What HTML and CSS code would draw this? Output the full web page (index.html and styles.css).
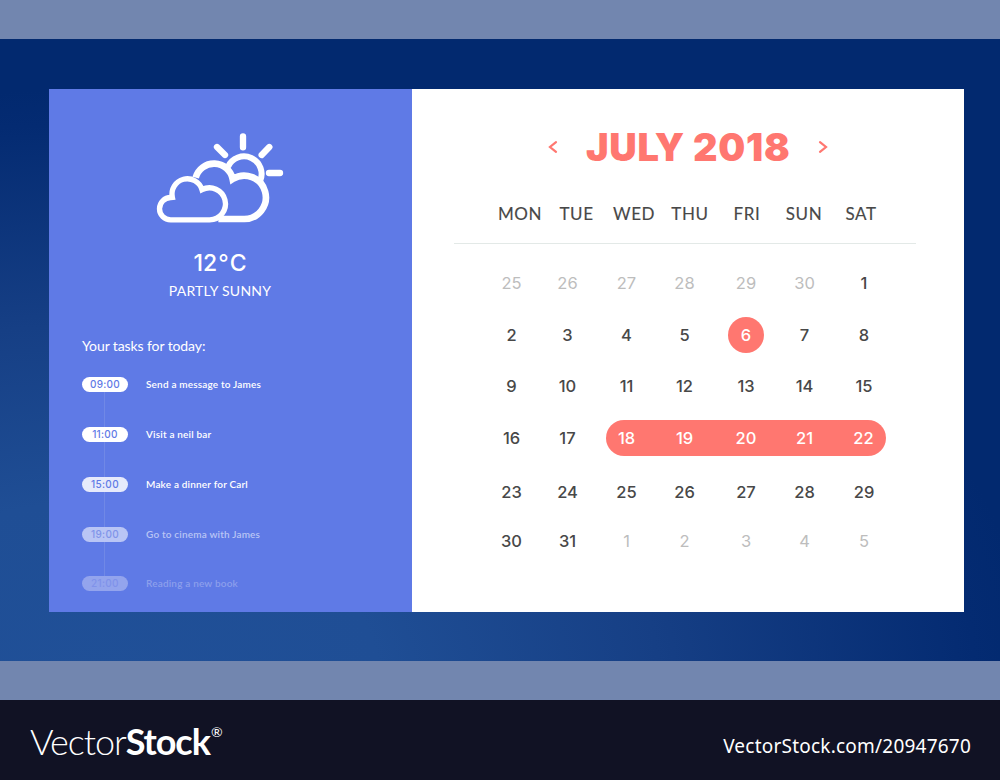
FILE: index.html
```
<!DOCTYPE html>
<html lang="en">
<head>
<meta charset="utf-8">
<title>Calendar</title>
<link rel="stylesheet" href="styles.css">
</head>
<body>
<main class="stage">
  <div class="backdrop">
    <div class="card">
      <aside class="side">
        <svg class="weather-icon" viewBox="0 0 480 360" fill="none" stroke="#fff">
          <g stroke-width="19" stroke-linecap="round">
            <path d="M309 49V82M231 81L255 105M388 81L365 105M387 159H420"/>
          </g>
          <path stroke-width="18" d="M264 140A51 51 0 0 1 360 184"/>
          <path stroke-width="20" d="M167 173A57 57 0 0 1 278 177A65 65 0 1 1 311 297H235"/>
          <path stroke-width="16" d="M97 232A46 46 0 0 1 186 209A48 48 0 1 1 209 299.500H92A33.500 33.500 0 0 1 92 232.500Z"/>
        </svg>
        <p class="temp">12<span class="deg">°</span>C</p>
        <p class="condition">PARTLY SUNNY</p>
        <h2 class="tasks-title">Your tasks for today:</h2>
        <ul class="tasks">
          <li class="task"><span class="time">09:00</span><span class="label">Send a message to James</span></li>
          <li class="task"><span class="time">11:00</span><span class="label">Visit a neil bar</span></li>
          <li class="task soft"><span class="time">15:00</span><span class="label">Make a dinner for Carl</span></li>
          <li class="task faded"><span class="time">19:00</span><span class="label">Go to cinema with James</span></li>
          <li class="task ghost"><span class="time">21:00</span><span class="label">Reading a new book</span></li>
        </ul>
      </aside>
      <section class="calendar">
        <header class="month">
          <svg class="arrow" viewBox="0 0 10 14"><path d="M8 2.200L2 7L8 11.800"/></svg>
          <h1 class="month-name">JULY 2018</h1>
          <svg class="arrow" viewBox="0 0 10 14"><path d="M2 2.200L8 7L2 11.800"/></svg>
        </header>
        <div class="weekdays"><span>MON</span><span>TUE</span><span>WED</span><span>THU</span><span>FRI</span><span>SUN</span><span>SAT</span></div>
        <div class="days">
          <span class="out">25</span><span class="out">26</span><span class="out">27</span><span class="out">28</span><span class="out">29</span><span class="out">30</span><span>1</span>
          <span>2</span><span>3</span><span>4</span><span>5</span><span class="today">6</span><span>7</span><span>8</span>
          <span>9</span><span>10</span><span>11</span><span>12</span><span>13</span><span>14</span><span>15</span>
          <span>16</span><span>17</span><div class="range"><span>18</span><span>19</span><span>20</span><span>21</span><span>22</span></div>
          <span>23</span><span>24</span><span>25</span><span>26</span><span>27</span><span>28</span><span>29</span>
          <span>30</span><span>31</span><span class="out">1</span><span class="out">2</span><span class="out">3</span><span class="out">4</span><span class="out">5</span>
        </div>
      </section>
    </div>
  </div>
</main>
<footer class="footer">
  <div class="brand"><span class="thin">Vector</span><b>Stock</b><span class="reg">®</span></div>
  <div class="link">VectorStock.com/20947670</div>
</footer>
</body>
</html>
```
FILE: styles.css
```
* { box-sizing: border-box; margin: 0; padding: 0; }
body { width: 1000px; height: 780px; overflow: hidden; font-family: Lato, "Liberation Sans", sans-serif; }
.stage { height: 700px; padding: 39px 0; background: #7286af; }
.backdrop {
  height: 622px; padding: 50px 36px 49px 49px;
  background: radial-gradient(ellipse 930px 590px at 100px 640px, #205098 0%, #1f4e95 30%, #163f85 60%, #042b72 94%, #02296f 100%);
}
.card { display: flex; height: 523px; }
.side { width: 363px; padding: 31px 33px 0; background: #5f7ae6; color: #fff; display: flex; flex-direction: column; }
.side > * { flex: none; }
.weather-icon { width: 160px; height: 120px; margin-left: 58px; }
.temp { margin: 6px 21px 0 0; height: 34px; line-height: 35px; font-family: Inter, sans-serif; font-size: 23px; font-weight: 500; text-align: center; }
.deg { margin: 0 1px; font-weight: 400; }
.condition { height: 22px; line-height: 22px; margin-right: 21px; font-size: 14px; letter-spacing: .25px; text-align: center; white-space: nowrap; }
.tasks-title { margin-top: 32px; height: 24px; line-height: 24px; font-size: 14px; font-weight: 400; letter-spacing: -.1px; white-space: nowrap; }
.tasks {
  margin-top: 18px; list-style: none;
  background: linear-gradient(#7088e6, #7088e6) 22px 8px / 1px 196px no-repeat;
}
.task { display: flex; align-items: center; height: 16px; margin-bottom: 34px; }
.time { width: 46px; height: 15px; line-height: 15px; border-radius: 8px; background: #fff; color: #5f7ae6; text-align: center; font-family: Inter, sans-serif; font-size: 10px; font-weight: 500; letter-spacing: .3px; }
.label { margin-left: 18px; font-size: 10px; font-weight: 600; letter-spacing: .18px; white-space: nowrap; }
.soft .time { background: #e6eafb; }
.faded { color: #b9c5f5; }
.faded .time { background: #b9c5f5; color: #8094e9; }
.ghost { color: #8c9fec; margin-top: -1px; }
.ghost .time { background: #93a4ed; color: #8092ea; }
.calendar { width: 552px; padding: 34px 48px 0 42px; background: #fff; color: #484848; }
.month { display: flex; align-items: center; height: 48px; padding-left: 94px; color: #ff7770; }
.month-name { width: 204px; margin: 0 28px; font-family: Inter, sans-serif; font-size: 38px; font-weight: 900; letter-spacing: .7px; line-height: 50px; white-space: nowrap; }
.arrow { width: 10px; height: 14px; fill: none; stroke: #ff7770; stroke-width: 2.200; stroke-linecap: round; flex: none; }
.weekdays {
  display: grid; grid-template-columns: 56px 57px 58px 54px 60px 54px 60px;
  width: 462px; height: 73px; padding: 27px 0 0 38px; border-bottom: 1px solid #e3e9e7;
  font-size: 17px; line-height: 32px; text-align: center; letter-spacing: .6px; -webkit-text-stroke: .15px;
}
.days {
  display: grid; grid-template-columns: 55px 57px 61px 55px 68px 49px 70px;
  grid-template-rows: 52px 52px 50px 53px 55px 44px;
  padding: 13px 0 0 30px; font-family: Inter, sans-serif; font-size: 16.500px; font-weight: 500; align-items: center; text-align: center;
}
.out { color: #bdbdbd; font-weight: 400; }
.today { justify-self: center; width: 36px; height: 36px; line-height: 36px; border-radius: 50%; background: #ff7770; color: #fff; }
.range {
  grid-column: 3 / 8; display: grid; grid-template-columns: 41px 75px 48px 69px 49px;
  width: 280px; height: 36px; line-height: 36px; margin-left: 10px; border-radius: 18px;
  background: #ff7770; color: #fff;
}
.footer { display: flex; justify-content: space-between; height: 80px; padding: 0 29px 0 30px; background: #111224; color: #fff; }
.brand { display: flex; font-size: 36px; line-height: 82px; letter-spacing: -1.050px; }
.thin { font-weight: 300; }
.reg { font-size: 14px; line-height: 63px; letter-spacing: 0; margin-left: 1px; }
.link { font-family: "Noto Sans", sans-serif; font-size: 19px; letter-spacing: .22px; line-height: 93px; }
```
